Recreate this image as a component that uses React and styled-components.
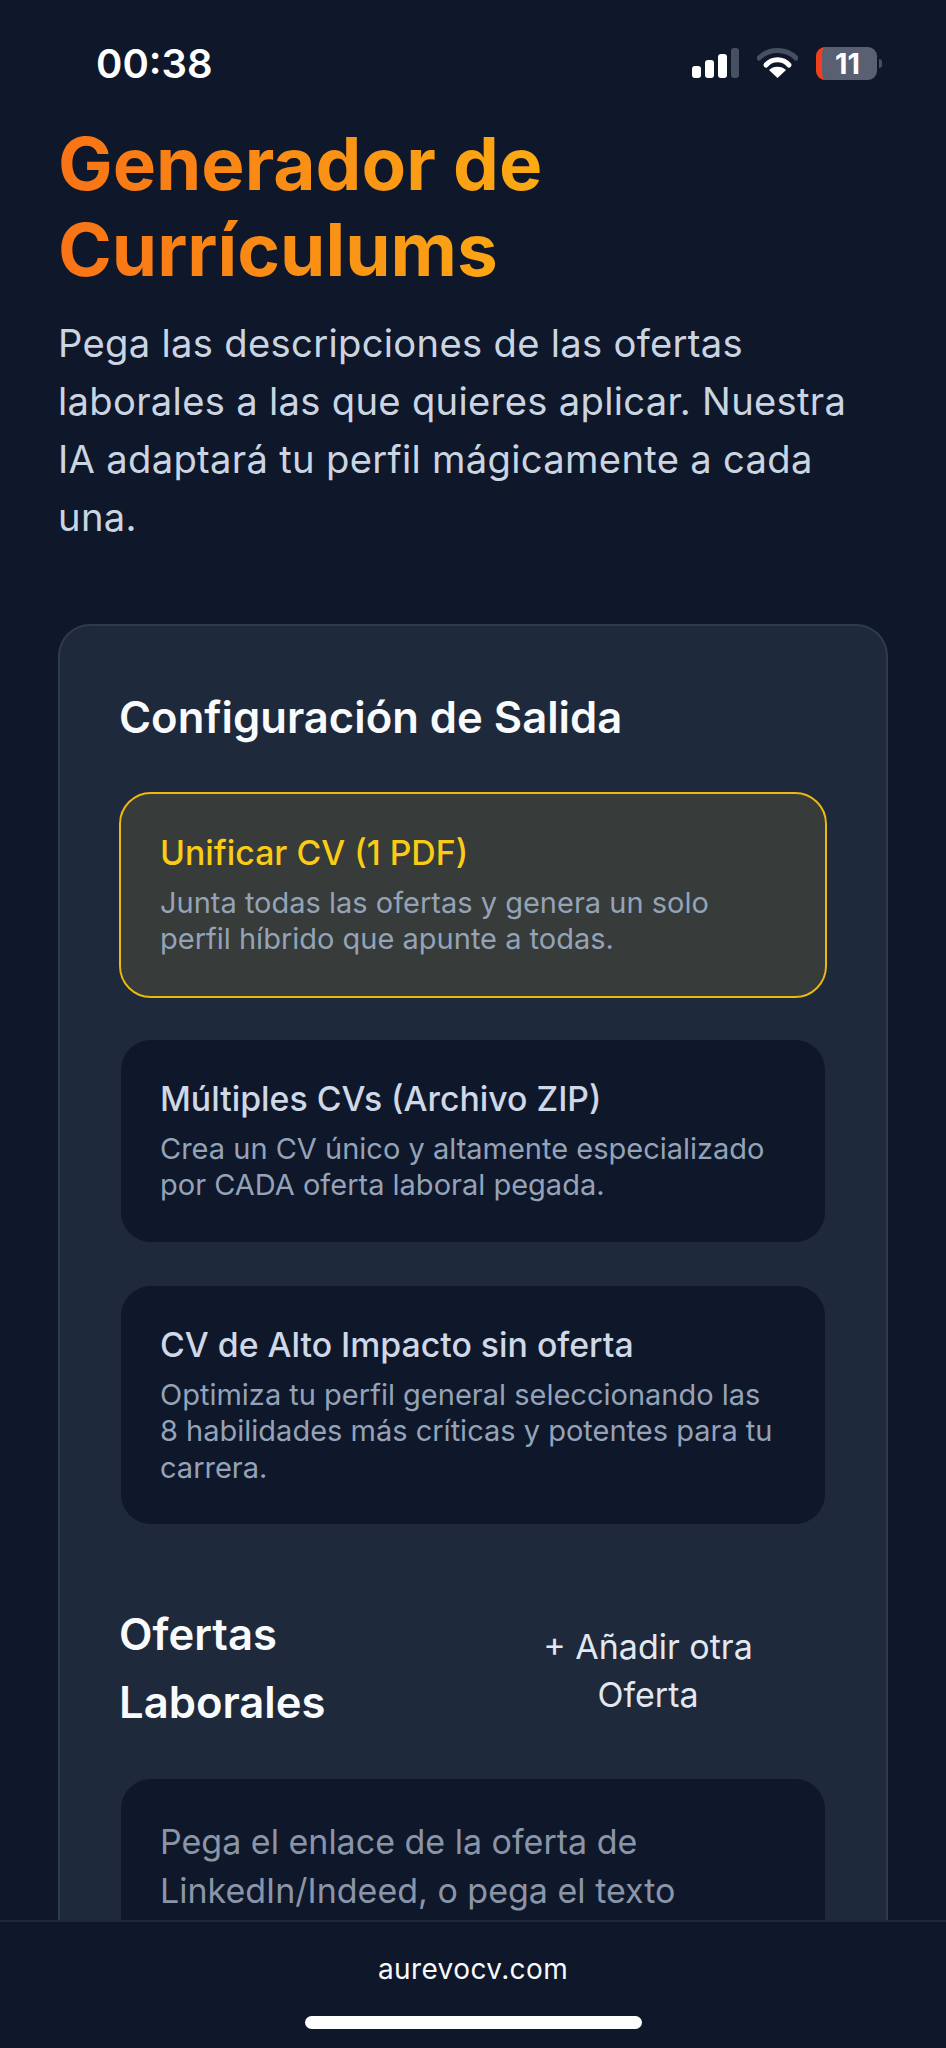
import React from "react";
import styled, { createGlobalStyle } from "styled-components";

const Global = createGlobalStyle`
  html, body { margin: 0; padding: 0; background: #0f172a; }
  body { font-family: Inter, "Liberation Sans", sans-serif; }
`;

const Screen = styled.div`
  position: relative;
  width: 946px;
  height: 2048px;
  overflow: hidden;
  background: #0f172a;
  color: #f8fafc;
`;

const StatusBar = styled.header`
  display: flex;
  align-items: center;
  justify-content: space-between;
  height: 126px;
  margin-bottom: -5px;
  padding: 0 69px 0 96px;
  box-sizing: border-box;
`;

const Clock = styled.span`
  font-size: 40px;
  font-weight: 600;
  color: #fff;
`;

const StatusIcons = styled.div`
  display: flex;
  align-items: center;
  gap: 18px;
`;

const BatteryBody = styled.div`
  position: relative;
  box-sizing: border-box;
  width: 61px;
  height: 33px;
  border-radius: 9px;
  border-left: 6px solid #f0401f;
  background: #596072;
  color: #fff;
  font-size: 29px;
  line-height: 33px;
  font-weight: 700;
  text-align: center;
  padding-right: 4px;
  &::after {
    content: "";
    position: absolute;
    right: -5px;
    top: 12px;
    width: 3px;
    height: 9px;
    border-radius: 0 5px 5px 0;
    background: #475063;
  }
`;

const Main = styled.main`
  padding: 0 58px;
`;

const Title = styled.h1`
  margin: 0;
  width: max-content;
  font-size: 72.8px;
  line-height: 86px;
  font-weight: 700;
  background: linear-gradient(90deg, #f97316, #fbab14);
  -webkit-background-clip: text;
  background-clip: text;
  color: transparent;
`;

const Intro = styled.p`
  margin: 21px 0 77.6px;
  font-size: 38.2px;
  line-height: 58px;
  letter-spacing: 0.3px;
  color: #cbd5e1;
`;

const Card = styled.section`
  box-sizing: border-box;
  width: 830px;
  height: 1400px;
  padding: 60px 59px 0;
  background: #1e293b;
  border: 2px solid #2d3b50;
  border-bottom: 0;
  border-radius: 32px 32px 0 0;
`;

const SectionTitle = styled.h2`
  margin: 0 0 42px;
  font-size: 43.6px;
  line-height: 64px;
  font-weight: 600;
  color: #f8fafc;
`;

const Options = styled.div`
  display: flex;
  flex-direction: column;
  gap: 40px;
`;

const Option = styled.div`
  box-sizing: border-box;
  padding: 35px 39px 37.8px;
  border-radius: 32px;
  border: 2px solid ${(p) => (p.$active ? "#eeb90f" : "transparent")};
  background: ${(p) => (p.$active ? "#373b39" : "#0f172a")};
  background-clip: padding-box;
`;

const OptionTitle = styled.div`
  font-size: 33.8px;
  line-height: 48px;
  font-weight: 500;
  color: ${(p) => (p.$active ? "#facc15" : "#cfd8e6")};
`;

const OptionText = styled.div`
  margin-top: 8px;
  font-size: 29px;
  line-height: 36.6px;
  color: #94a3b8;
`;

const OffersHead = styled.div`
  display: flex;
  align-items: center;
  justify-content: space-between;
  margin: 75px 0 40px;
`;

const OffersTitle = styled.h2`
  margin: 0;
  width: 240px;
  font-size: 43.6px;
  line-height: 68px;
  font-weight: 600;
  color: #f8fafc;
`;

const AddButton = styled.div`
  width: 280px;
  margin: 3px 39px 0 0;
  text-align: center;
  font-size: 34px;
  line-height: 48px;
  font-weight: 400;
  color: #e2e8f0;
`;

const OfferBox = styled.div`
  padding: 39px 39px;
  height: 400px;
  border-radius: 32px;
  background: #0f172a;
  background-clip: padding-box;
  border: 2px solid transparent;
  font-size: 34px;
  line-height: 48.5px;
  color: #8b95a8;
`;

const Footer = styled.footer`
  position: absolute;
  left: 0;
  right: 0;
  bottom: 0;
  height: 126px;
  display: flex;
  flex-direction: column;
  align-items: center;
  background: #0f172a;
  border-top: 2px solid #1e293b;
`;

const Domain = styled.div`
  margin-top: 30px;
  font-size: 28px;
  line-height: 34px;
  letter-spacing: 0.4px;
  color: #f8fafc;
`;

const HomeBar = styled.div`
  position: absolute;
  bottom: 19px;
  left: 305px;
  width: 337px;
  height: 13px;
  border-radius: 7px;
  background: #fff;
`;

const Signal = () => (
  <svg width="47" height="30" viewBox="0 0 47 30">
    <rect x="0" y="18" width="9" height="12" rx="3" fill="#fff" />
    <rect x="13" y="12" width="9" height="18" rx="3" fill="#fff" />
    <rect x="26" y="6" width="9" height="24" rx="3" fill="#fff" />
    <rect x="39" y="0" width="8" height="30" rx="3" fill="#475063" />
  </svg>
);

const Wifi = () => (
  <svg width="41" height="30" viewBox="0 0 41 30">
    <path d="M2 10 C12 0 29 0 39 10" fill="none" stroke="#475063" strokeWidth="5" strokeLinecap="round" />
    <path d="M9 17 C15 10 26 10 32 17" fill="none" stroke="#fff" strokeWidth="5" strokeLinecap="round" />
    <path d="M20.5 30 L12 22 C16 17.5 25 17.5 29 22 Z" fill="#fff" />
  </svg>
);

export default function App() {
  return (
    <Screen>
      <Global />
      <StatusBar>
        <Clock>00:38</Clock>
        <StatusIcons>
          <Signal />
          <Wifi />
          <BatteryBody>11</BatteryBody>
        </StatusIcons>
      </StatusBar>
      <Main>
        <Title>
          Generador de
          <br />
          Currículums
        </Title>
        <Intro>
          Pega las descripciones de las ofertas laborales a las que quieres aplicar. Nuestra IA adaptará tu perfil mágicamente a cada una.
        </Intro>
        <Card>
          <SectionTitle>Configuración de Salida</SectionTitle>
          <Options>
            <Option $active>
              <OptionTitle $active>Unificar CV (1 PDF)</OptionTitle>
              <OptionText>Junta todas las ofertas y genera un solo perfil híbrido que apunte a todas.</OptionText>
            </Option>
            <Option>
              <OptionTitle>Múltiples CVs (Archivo ZIP)</OptionTitle>
              <OptionText>Crea un CV único y altamente especializado por CADA oferta laboral pegada.</OptionText>
            </Option>
            <Option>
              <OptionTitle>CV de Alto Impacto sin oferta</OptionTitle>
              <OptionText>Optimiza tu perfil general seleccionando las 8 habilidades más críticas y potentes para tu carrera.</OptionText>
            </Option>
          </Options>
          <OffersHead>
            <OffersTitle>Ofertas Laborales</OffersTitle>
            <AddButton>+ Añadir otra Oferta</AddButton>
          </OffersHead>
          <OfferBox>Pega el enlace de la oferta de LinkedIn/Indeed, o pega el texto</OfferBox>
        </Card>
      </Main>
      <Footer>
        <Domain>aurevocv.com</Domain>
        <HomeBar />
      </Footer>
    </Screen>
  );
}
